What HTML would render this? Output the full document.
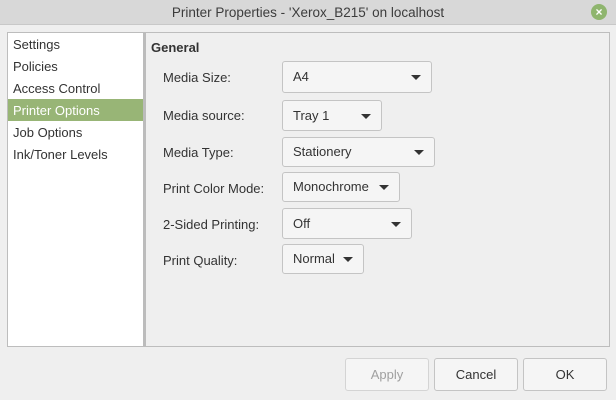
<!DOCTYPE html><html><head><style>
body{margin:0;width:616px;height:400px;background:#efefef;font-family:"Liberation Sans",sans-serif;font-size:13px;color:#333;position:relative;overflow:hidden}
.t{position:absolute;left:0;top:0;width:616px;height:24px;background:#d8d8d8;border-bottom:1px solid #c8c8c8;text-align:center;line-height:25px;font-size:13.5px;color:#3c3c3c}
.x{position:absolute;right:9px;top:4px;width:16px;height:16px;border-radius:50%;background:#8fb56e;color:#fff;font-size:12px;line-height:16px;text-align:center;font-weight:bold}
.frame{position:absolute;left:7px;top:32px;width:601px;height:313px;border:1px solid #bdbdbd;background:#efefef}
.side{position:absolute;left:0;top:0;width:135px;height:313px;background:#fff;border-right:3px solid #bcbcbc}
.side div{height:22px;line-height:23px;padding-left:5px;color:#333}
.side .s{background:#98b576;color:#fff}
.l{position:absolute;left:163px}
.d{position:absolute;left:282px;border:1px solid #c4c4c4;border-radius:3px;background:#f5f5f5;box-sizing:border-box;padding-left:10px}
.d:after{content:"";position:absolute;right:10px;top:50%;margin-top:-2px;border-left:5px solid transparent;border-right:5px solid transparent;border-top:5px solid #333}
.b{position:absolute;top:358px;height:33px;width:84px;box-sizing:border-box;border:1px solid #c4c4c4;border-radius:3px;background:#f5f5f5;text-align:center;line-height:31px}
</style></head><body>
<div class="t">Printer Properties - 'Xerox_B215' on localhost<div class="x">×</div></div>
<div class="frame"><div class="side"><div>Settings</div><div>Policies</div><div>Access Control</div><div class="s">Printer Options</div><div>Job Options</div><div>Ink/Toner Levels</div></div></div>
<div style="position:absolute;left:151px;top:40px;font-weight:bold">General</div>
<div class="l" style="top:70px">Media Size:</div><div class="d" style="top:61px;width:150px;height:32px;line-height:30px">A4</div>
<div class="l" style="top:108px">Media source:</div><div class="d" style="top:100px;width:100px;height:31px;line-height:29px">Tray 1</div>
<div class="l" style="top:145px">Media Type:</div><div class="d" style="top:137px;width:153px;height:30px;line-height:28px">Stationery</div>
<div class="l" style="top:181px">Print Color Mode:</div><div class="d" style="top:172px;width:118px;height:30px;line-height:28px;padding-right:26px">Monochrome</div>
<div class="l" style="top:217px">2-Sided Printing:</div><div class="d" style="top:208px;width:130px;height:31px;line-height:29px">Off</div>
<div class="l" style="top:253px">Print Quality:</div><div class="d" style="top:244px;width:82px;height:30px;line-height:28px">Normal</div>
<div class="b" style="left:345px;color:#a0a0a0;border-color:#d4d4d4">Apply</div>
<div class="b" style="left:434px">Cancel</div>
<div class="b" style="left:523px">OK</div>
</body></html>
